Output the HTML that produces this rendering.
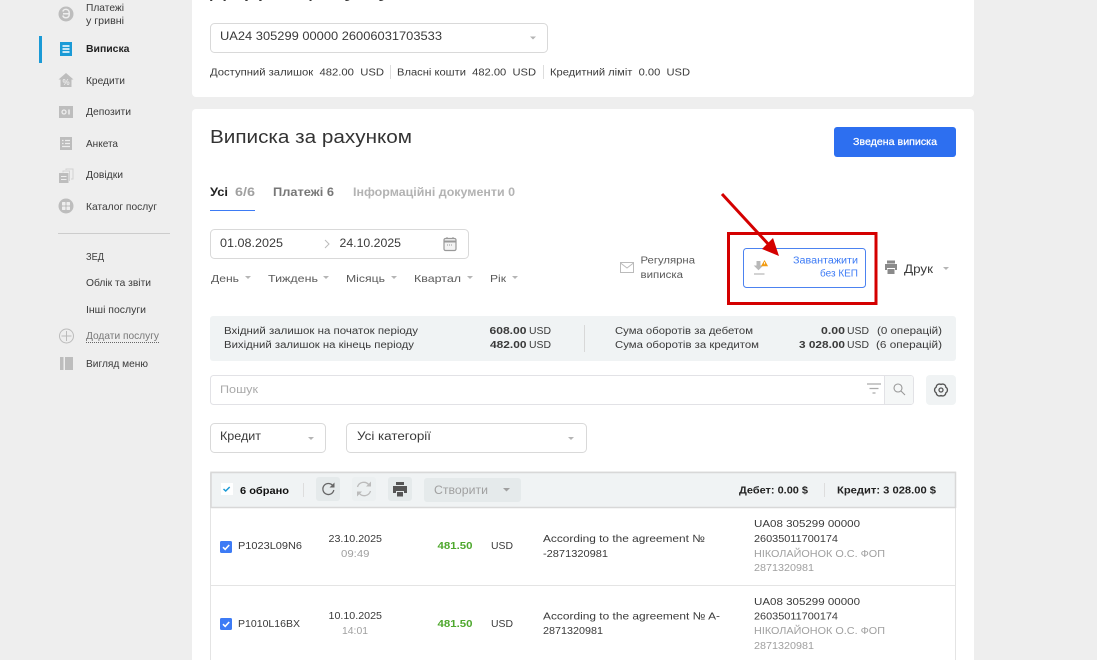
<!DOCTYPE html>
<html lang="uk"><head><meta charset="utf-8"><title>Виписка</title>
<style>
html,body{margin:0;padding:0;background:#eee;width:1097px;height:660px;overflow:hidden}
svg{display:block}
text{font-family:"Liberation Sans","Noto Sans CJK SC",sans-serif;font-size:10.5px;fill:#3a3a3a;white-space:pre}
.b{font-weight:700}
.g{fill:#a0a0a0}
.s{fill:#5a5a5a}
</style></head><body>
<svg width="1097" height="660" viewBox="0 0 1097 660" xmlns="http://www.w3.org/2000/svg">
<defs><g id="cb"><rect width="12" height="12" rx="1.5" fill="#3d7bf5"/><path d="M3 6.2l2.2 2.2L9.2 4" fill="none" stroke="#fff" stroke-width="1.6"/></g></defs>
<rect width="1097" height="660" fill="#eee"/>
<!-- sidebar -->
<rect x="39" y="36" width="3" height="27" fill="#1a9ad6"/>
<circle cx="66" cy="14" r="7.500" fill="#bdbdbd"/><path d="M62.800 11.500a3.300 3.300 0 0 1 6.400 1v2.500a3.300 3.300 0 0 1-6.400 0.500M63 13.800h6" fill="none" stroke="#eee" stroke-width="1.500"/>
<rect x="60" y="42" width="12" height="14" fill="#1a9ad6"/><path d="M62.500 46h7M62.500 49h7M62.500 52h7" stroke="#fff" stroke-width="1.600"/>
<path d="M66 73l7.500 6.500H71.500V87H60.500V79.500H58.500z" fill="#bdbdbd"/><text x="62.500" y="85" style="font-size:8px;fill:#eee" class="b">%</text>
<rect x="59" y="106" width="14" height="12" fill="#bdbdbd"/><circle cx="64" cy="112" r="2" fill="none" stroke="#eee" stroke-width="1.300"/><path d="M69 109.500v5" stroke="#eee" stroke-width="1.500"/>
<rect x="60" y="137" width="12" height="13" fill="#bdbdbd"/><path d="M62 140.500h1.500M65 140.500h5M62 143.500h1.500M65 143.500h5M62 146.500h8" stroke="#eee" stroke-width="1.200"/>
<path d="M66 170v-1h7v10h-2M63 172.500v-1.500h6.500v10" fill="none" stroke="#d2d2d2" stroke-width="1"/>
<rect x="59" y="173" width="9.500" height="10" fill="#bdbdbd"/><path d="M61 176.500h5.500M61 179.500h5.500" stroke="#eee"/>
<circle cx="66" cy="206" r="7.500" fill="#bdbdbd"/><rect x="62" y="202" width="3.500" height="3.500" rx=".6" fill="#eee"/><rect x="66.500" y="202" width="3.500" height="3.500" rx=".6" fill="#eee"/><rect x="62" y="206.500" width="3.500" height="3.500" rx=".6" fill="#eee"/><rect x="66.500" y="206.500" width="3.500" height="3.500" rx=".6" fill="#eee"/>
<text x="86" y="11" textLength="38" lengthAdjust="spacingAndGlyphs">Платежі</text>
<text x="86" y="24" textLength="38" lengthAdjust="spacingAndGlyphs">у гривні</text>
<text x="86" y="52" textLength="43.500" lengthAdjust="spacingAndGlyphs" class="b" style="fill:#222">Виписка</text>
<text x="86" y="84" textLength="39" lengthAdjust="spacingAndGlyphs">Кредити</text>
<text x="86" y="115" textLength="45" lengthAdjust="spacingAndGlyphs">Депозити</text>
<text x="86" y="147" textLength="32" lengthAdjust="spacingAndGlyphs">Анкета</text>
<text x="86" y="178" textLength="37" lengthAdjust="spacingAndGlyphs">Довідки</text>
<text x="86" y="210" textLength="71" lengthAdjust="spacingAndGlyphs">Каталог послуг</text>
<rect x="58" y="233" width="112" height="1" fill="#ccc"/>
<text x="86" y="260" textLength="18" lengthAdjust="spacingAndGlyphs">ЗЕД</text>
<text x="86" y="286" textLength="65" lengthAdjust="spacingAndGlyphs">Облік та звіти</text>
<text x="86" y="313" textLength="60" lengthAdjust="spacingAndGlyphs">Інші послуги</text>
<text x="86" y="339" textLength="73" lengthAdjust="spacingAndGlyphs" style="fill:#777">Додати послугу</text>
<path d="M86 342.500h73" stroke="#666" stroke-dasharray="1 1"/>
<circle cx="66.500" cy="336" r="7" fill="none" stroke="#bbb"/><path d="M66.500 331v10M61.500 336h10" stroke="#bbb"/>
<text x="86" y="367" textLength="62" lengthAdjust="spacingAndGlyphs">Вигляд меню</text>
<rect x="60" y="357" width="3.500" height="13" fill="#bdbdbd"/><rect x="65" y="357" width="8" height="13" fill="#bdbdbd"/>
<!-- card 1 -->
<path d="M192 0H974V93a4 4 0 0 1-4 4H196a4 4 0 0 1-4-4z" fill="#fff"/>
<text x="210" y="-3" textLength="28" lengthAdjust="spacingAndGlyphs" style="font-size:18px">Дії</text>
<text x="245" y="-3" textLength="50" lengthAdjust="spacingAndGlyphs" style="font-size:18px">для</text>
<text x="308" y="-3" textLength="82" lengthAdjust="spacingAndGlyphs" style="font-size:18px">рахунку</text>
<rect x="210.500" y="23.500" width="337" height="29" rx="4" fill="#fff" stroke="#d9d9d9"/>
<text x="220" y="40" textLength="222" lengthAdjust="spacingAndGlyphs" style="font-size:11.500px">UA24 305299 00000 26006031703533</text>
<path d="M530 36.500h6l-3 3z" fill="#b5b5b5"/>
<text x="210" y="75.500" textLength="174" lengthAdjust="spacingAndGlyphs" style="font-size:10px">Доступний залишок  482.00  USD</text>
<rect x="390" y="65" width="1" height="14" fill="#ddd"/>
<text x="397" y="75.500" textLength="139" lengthAdjust="spacingAndGlyphs" style="font-size:10px">Власні кошти  482.00  USD</text>
<rect x="543" y="65" width="1" height="14" fill="#ddd"/>
<text x="550" y="75.500" textLength="140" lengthAdjust="spacingAndGlyphs" style="font-size:10px">Кредитний ліміт  0.00  USD</text>
<!-- card 2 -->
<path d="M192 113a4 4 0 0 1 4-4H970a4 4 0 0 1 4 4V660H192z" fill="#fff"/>
<text x="210" y="143" textLength="202" lengthAdjust="spacingAndGlyphs" style="font-size:18.500px;fill:#333">Виписка за рахунком</text>
<rect x="834" y="127" width="122" height="30" rx="3" fill="#2d6ff0"/>
<text x="853" y="145" textLength="84" lengthAdjust="spacingAndGlyphs" style="font-size:10.500px;fill:#fff;stroke:#fff;stroke-width:.25">Зведена виписка</text>
<text x="210" y="196" textLength="18" lengthAdjust="spacingAndGlyphs" class="b" style="font-size:11.500px;fill:#222">Усі</text>
<text x="235" y="196" textLength="20" lengthAdjust="spacingAndGlyphs" class="b g" style="font-size:11.500px">6/6</text>
<text x="273" y="196" textLength="61" lengthAdjust="spacingAndGlyphs" class="b" style="font-size:11.500px;fill:#777">Платежі 6</text>
<text x="353" y="196" textLength="162" lengthAdjust="spacingAndGlyphs" class="b" style="font-size:11.500px;fill:#b3b3b3">Інформаційні документи 0</text>
<rect x="210" y="210" width="45" height="1" fill="#3d7bf5"/>
<!-- dates -->
<rect x="210.500" y="229.500" width="258" height="29" rx="4" fill="#fff" stroke="#d9d9d9"/>
<text x="220" y="247" textLength="63" lengthAdjust="spacingAndGlyphs" style="font-size:11.500px">01.08.2025</text>
<path d="M325 240l4 4-4 4" fill="none" stroke="#bbb"/>
<text x="339.500" y="247" textLength="61.500" lengthAdjust="spacingAndGlyphs" style="font-size:11.500px">24.10.2025</text>
<rect x="444" y="238.500" width="12" height="12" rx="1.500" fill="#f3f3f3" stroke="#999" stroke-width="1.200"/><path d="M444 241.500h12" stroke="#999" stroke-width="2"/><path d="M447 237v2M453 237v2" stroke="#999"/><path d="M447 245h6" stroke="#999" stroke-dasharray="1 1"/>
<text x="211" y="282" textLength="28" lengthAdjust="spacingAndGlyphs" class="s">День</text><path d="M245 276h6l-3 3z" fill="#b5b5b5"/>
<text x="268" y="282" textLength="50" lengthAdjust="spacingAndGlyphs" class="s">Тиждень</text><path d="M323 276h6l-3 3z" fill="#b5b5b5"/>
<text x="346" y="282" textLength="39" lengthAdjust="spacingAndGlyphs" class="s">Місяць</text><path d="M391 276h6l-3 3z" fill="#b5b5b5"/>
<text x="414" y="282" textLength="47" lengthAdjust="spacingAndGlyphs" class="s">Квартал</text><path d="M467 276h6l-3 3z" fill="#b5b5b5"/>
<text x="490" y="282" textLength="16" lengthAdjust="spacingAndGlyphs" class="s">Рік</text><path d="M512 276h6l-3 3z" fill="#b5b5b5"/>
<!-- regular -->
<rect x="620.500" y="262.500" width="13" height="10" fill="#fff" stroke="#bbb"/><path d="M620.500 263l6.500 5 6.500-5" fill="none" stroke="#bbb"/>
<text x="640.500" y="263.500" textLength="54.500" lengthAdjust="spacingAndGlyphs" style="font-size:10px" class="s">Регулярна</text>
<text x="640.500" y="278" textLength="42.500" lengthAdjust="spacingAndGlyphs" style="font-size:10px" class="s">виписка</text>
<rect x="743.500" y="248.500" width="122" height="39" rx="3" fill="#fff" stroke="#4c82f0"/>
<path d="M756.500 261h4v4.500h2.800l-4.800 4.800-4.800-4.800h2.800z" fill="#b8b8b8"/><path d="M754 274h10.500" stroke="#c4c4c4" stroke-width="1.500"/>
<path d="M764.500 260l3.600 6.300h-7.200z" fill="#f39c12"/><path d="M764.500 262v2.200" stroke="#fff" stroke-width=".8"/>
<text x="793" y="263.500" textLength="65" lengthAdjust="spacingAndGlyphs" style="font-size:10px;fill:#3d7bf5">Завантажити</text>
<text x="820" y="276.500" textLength="38" lengthAdjust="spacingAndGlyphs" style="font-size:10px;fill:#3d7bf5">без КЕП</text>
<rect x="728.500" y="233.500" width="147.500" height="70" fill="none" stroke="#d40000" stroke-width="3"/>
<path d="M722 194L770 246" stroke="#d40000" stroke-width="3"/><path d="M779 256l-17-7 11-11z" fill="#d40000"/>
<path d="M887 260.500h8v3h-8zM885 264h12v6h-2v-2h-8v2h-2zM887.500 269h7v5h-7z" fill="#8a8a8a"/>
<text x="904" y="273" textLength="29" lengthAdjust="spacingAndGlyphs" style="font-size:12px">Друк</text>
<path d="M943 267h6l-3 3z" fill="#b5b5b5"/>
<!-- summary -->
<rect x="210" y="316" width="746" height="45" rx="3" fill="#f0f3f4"/>
<text x="224" y="334" textLength="194" lengthAdjust="spacingAndGlyphs" style="font-size:10px">Вхідний залишок на початок періоду</text>
<text x="224" y="348" textLength="190" lengthAdjust="spacingAndGlyphs" style="font-size:10px">Вихідний залишок на кінець періоду</text>
<text x="489.500" y="334" textLength="37" lengthAdjust="spacingAndGlyphs" class="b" style="font-size:10.500px">608.00</text><text x="529" y="334" textLength="22" lengthAdjust="spacingAndGlyphs" style="font-size:10px">USD</text>
<text x="490" y="348" textLength="36.500" lengthAdjust="spacingAndGlyphs" class="b" style="font-size:10.500px">482.00</text><text x="529" y="348" textLength="22" lengthAdjust="spacingAndGlyphs" style="font-size:10px">USD</text>
<rect x="584" y="325" width="1" height="27" fill="#d8d8d8"/>
<text x="615" y="334" textLength="138" lengthAdjust="spacingAndGlyphs" style="font-size:10px">Сума оборотів за дебетом</text>
<text x="615" y="348" textLength="144" lengthAdjust="spacingAndGlyphs" style="font-size:10px">Сума оборотів за кредитом</text>
<text x="821" y="334" textLength="24" lengthAdjust="spacingAndGlyphs" class="b" style="font-size:10.500px">0.00</text><text x="847" y="334" textLength="22" lengthAdjust="spacingAndGlyphs" style="font-size:10px">USD</text>
<text x="799" y="348" textLength="46" lengthAdjust="spacingAndGlyphs" class="b" style="font-size:10.500px">3 028.00</text><text x="847" y="348" textLength="22" lengthAdjust="spacingAndGlyphs" style="font-size:10px">USD</text>
<text x="877" y="334" textLength="65" lengthAdjust="spacingAndGlyphs" style="font-size:10px">(0 операцій)</text>
<text x="876" y="348" textLength="66" lengthAdjust="spacingAndGlyphs" style="font-size:10px">(6 операцій)</text>
<!-- search -->
<rect x="210.500" y="375.500" width="703" height="29" rx="3" fill="#fff" stroke="#e2e2e6"/>
<path d="M885 376h26a2 2 0 0 1 2 2v24a2 2 0 0 1-2 2h-26z" fill="#f5f7f7"/><rect x="884" y="376" width="1" height="28" fill="#e2e2e6"/>
<text x="220" y="393" textLength="38" lengthAdjust="spacingAndGlyphs" style="font-size:11px;fill:#aaa">Пошук</text>
<path d="M867 384h14M869.500 388.500h9M872.500 393h3" stroke="#aaa" stroke-width="1.200"/>
<circle cx="898" cy="388" r="4" fill="none" stroke="#999" stroke-width="1.100"/><path d="M901 391l4 4" stroke="#999" stroke-width="1.100"/>
<rect x="926" y="375" width="30" height="30" rx="4" fill="#f0f3f4"/>
<path d="M941 384.500A3.200 3.200 0 0 1 945.800 387.200A3.200 3.200 0 0 1 945.800 392.800A3.200 3.200 0 0 1 941 395.500A3.200 3.200 0 0 1 936.200 392.800A3.200 3.200 0 0 1 936.200 387.200A3.200 3.200 0 0 1 941 384.500Z" fill="none" stroke="#555" stroke-width="1.300" stroke-linejoin="round"/>
<circle cx="941" cy="390" r="2" fill="none" stroke="#555" stroke-width="1.300"/>
<!-- selects -->
<rect x="210.500" y="423.500" width="115" height="29" rx="4" fill="#fff" stroke="#d9d9d9"/>
<text x="220" y="440" textLength="41" lengthAdjust="spacingAndGlyphs" style="font-size:11.500px">Кредит</text><path d="M308 437h6l-3 3z" fill="#b5b5b5"/>
<rect x="346.500" y="423.500" width="240" height="29" rx="4" fill="#fff" stroke="#d9d9d9"/>
<text x="357" y="440" textLength="74" lengthAdjust="spacingAndGlyphs" style="font-size:11.500px">Усі категорії</text><path d="M568 437h6l-3 3z" fill="#b5b5b5"/>
<!-- table -->
<rect x="210.500" y="472" width="745" height="200" fill="#fff" stroke="#e4e4e4"/>
<rect x="211" y="472" width="744" height="36" fill="#f0f3f4"/>
<path d="M211 472.500h744.500V508M211 472.500V508M211 507.500h745" fill="none" stroke="#d8d8d8" stroke-width="1.500"/>
<rect x="221" y="483" width="12" height="12" fill="#fff"/><path d="M223.500 489l2.200 2 4-4" fill="none" stroke="#1a9ad6" stroke-width="1.500"/>
<text x="240" y="494" textLength="49" lengthAdjust="spacingAndGlyphs" class="b" style="font-size:10.500px;fill:#111">6 обрано</text>
<rect x="303" y="483" width="1" height="14" fill="#ddd"/>
<rect x="316" y="477" width="24" height="24" rx="3" fill="#e5eaeb"/>
<path d="M333 486a5.500 5.500 0 1 0 .8 4" fill="none" stroke="#666" stroke-width="1.300"/><path d="M334.500 482.500v5h-5z" fill="#666"/>
<rect x="352" y="477" width="24" height="24" rx="3" fill="#ecf0f1"/>
<path d="M357.500 487a6.500 6.500 0 0 1 11.500-2M370.500 491a6.500 6.500 0 0 1-11.500 2" fill="none" stroke="#bbb" stroke-width="1.300"/><path d="M371 481.500v5h-5zM357 496.500v-5h5z" fill="#bbb"/>
<rect x="388" y="477" width="24" height="24" rx="3" fill="#e5eaeb"/>
<path d="M396 482h8v3h-8zM393 486h14v7h-3v-2h-8v2h-3zM397 492h6v4.500h-6z" fill="#555"/>
<rect x="424" y="478" width="97" height="24" rx="3" fill="#e5eaeb"/>
<text x="434" y="494" textLength="54" lengthAdjust="spacingAndGlyphs" style="font-size:11.500px;fill:#a0a0a0">Створити</text><path d="M503 488h7l-3.500 3.500z" fill="#a0a0a0"/>
<text x="739" y="493.500" textLength="69" lengthAdjust="spacingAndGlyphs" class="b" style="font-size:10px;fill:#222">Дебет: 0.00 $</text>
<rect x="824" y="483" width="1" height="14" fill="#ddd"/>
<text x="837" y="493.500" textLength="99" lengthAdjust="spacingAndGlyphs" class="b" style="font-size:10px;fill:#222">Кредит: 3 028.00 $</text>
<!-- row 1 -->
<use href="#cb" x="220" y="541"/>
<text x="238" y="549" textLength="64" lengthAdjust="spacingAndGlyphs">P1023L09N6</text>
<text x="328.500" y="542" textLength="53.500" lengthAdjust="spacingAndGlyphs">23.10.2025</text>
<text x="341" y="557" textLength="28.500" lengthAdjust="spacingAndGlyphs" class="g">09:49</text>
<text x="437.500" y="549" textLength="35" lengthAdjust="spacingAndGlyphs" class="b" style="fill:#4fa82e">481.50</text>
<text x="491" y="549" textLength="22" lengthAdjust="spacingAndGlyphs">USD</text>
<text x="543" y="542" textLength="162" lengthAdjust="spacingAndGlyphs">According to the agreement №</text>
<text x="543" y="557" textLength="65" lengthAdjust="spacingAndGlyphs">-2871320981</text>
<text x="754" y="527" textLength="106" lengthAdjust="spacingAndGlyphs">UA08 305299 00000</text>
<text x="754" y="542" textLength="84" lengthAdjust="spacingAndGlyphs">26035011700174</text>
<text x="754" y="557" textLength="131" lengthAdjust="spacingAndGlyphs" class="g">НІКОЛАЙОНОК О.С. ФОП</text>
<text x="754" y="571" textLength="60" lengthAdjust="spacingAndGlyphs" class="g">2871320981</text>
<rect x="211" y="585" width="744" height="1" fill="#e4e4e4"/>
<!-- row 2 -->
<use href="#cb" x="220" y="618"/>
<text x="238" y="627" textLength="62" lengthAdjust="spacingAndGlyphs">P1010L16BX</text>
<text x="328.500" y="619" textLength="53.500" lengthAdjust="spacingAndGlyphs">10.10.2025</text>
<text x="342" y="634" textLength="26" lengthAdjust="spacingAndGlyphs" class="g">14:01</text>
<text x="437.500" y="627" textLength="35" lengthAdjust="spacingAndGlyphs" class="b" style="fill:#4fa82e">481.50</text>
<text x="491" y="627" textLength="22" lengthAdjust="spacingAndGlyphs">USD</text>
<text x="543" y="619.500" textLength="177" lengthAdjust="spacingAndGlyphs">According to the agreement № A-</text>
<text x="543" y="634" textLength="60" lengthAdjust="spacingAndGlyphs">2871320981</text>
<text x="754" y="605" textLength="106" lengthAdjust="spacingAndGlyphs">UA08 305299 00000</text>
<text x="754" y="619.500" textLength="84" lengthAdjust="spacingAndGlyphs">26035011700174</text>
<text x="754" y="634" textLength="131" lengthAdjust="spacingAndGlyphs" class="g">НІКОЛАЙОНОК О.С. ФОП</text>
<text x="754" y="649" textLength="60" lengthAdjust="spacingAndGlyphs" class="g">2871320981</text>
</svg>
</body></html>
